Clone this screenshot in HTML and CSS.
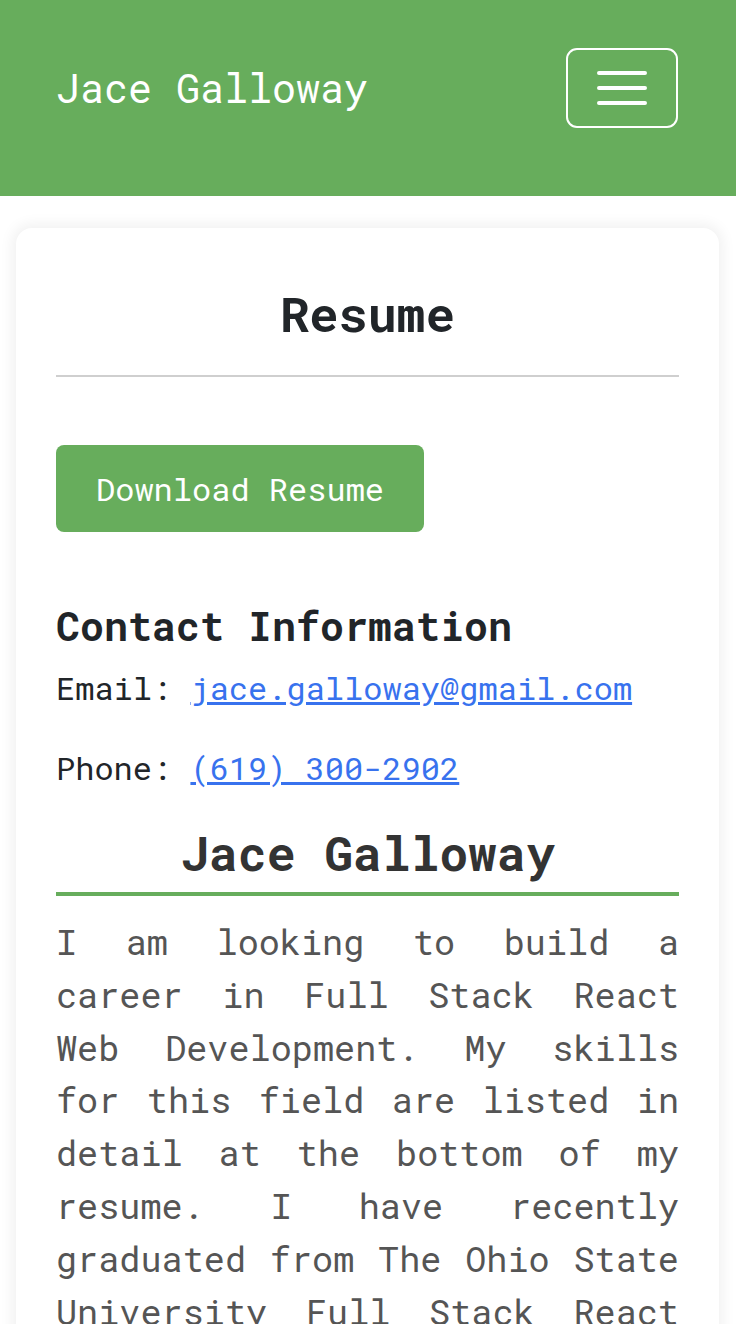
FILE: index.html
```html
<!DOCTYPE html>
<html lang="en">
<head>
<meta charset="utf-8">
<title>Jace Galloway - Resume</title>
<link rel="stylesheet" href="styles.css">
</head>
<body>
<nav class="navbar">
  <a class="brand" href="#">Jace Galloway</a>
  <button class="toggler" type="button" aria-label="Toggle navigation">
    <svg width="50" height="36" viewBox="0 0 50 36" aria-hidden="true">
      <path d="M2 3H48M2 18H48M2 33H48" stroke="#fff" stroke-width="4" stroke-linecap="round" fill="none"/>
    </svg>
  </button>
</nav>
<main class="page">
  <section class="card">
    <h2 class="title">Resume</h2>
    <hr class="rule">
    <a class="btn" href="#">Download Resume</a>
    <h5 class="section-head">Contact Information</h5>
    <p class="contact">Email: <a href="mailto:jace.galloway@gmail.com">jace.galloway@gmail.com</a></p>
    <p class="contact">Phone: <a href="tel:6193002902">(619) 300-2902</a></p>
    <h4 class="name">Jace Galloway</h4>
    <p class="summary">I am looking to build a career in Full Stack React Web Development. My skills for this field are listed in detail at the bottom of my resume. I have recently graduated from The Ohio State University Full Stack React Web Development bootcamp and am eager to put my skills to work.</p>
  </section>
</main>
</body>
</html>
```
FILE: styles.css
```css
* { box-sizing: border-box; }
html, body { margin: 0; padding: 0; }
body {
  background: #fff;
  font-family: "Roboto Mono", "DejaVu Sans Mono", monospace;
  color: #212529;
  font-size: 32px;
  line-height: 1.5;
}
.navbar {
  background: #67ad5c;
  display: flex;
  align-items: center;
  justify-content: space-between;
  padding: 48px 58px 68px 56px;
  height: 196px;
}
.brand {
  color: #fff;
  text-decoration: none;
  font-size: 40px;
  line-height: 60px;
}
.toggler {
  width: 112px;
  height: 80px;
  border: 2px solid #fff;
  border-radius: 11px;
  background: transparent;
  display: flex;
  align-items: center;
  justify-content: center;
  padding: 0;
}
.page {
  padding: 32px 17px 0 16px;
}
.card {
  background: #fff;
  border-radius: 16px;
  box-shadow: 0 0 14px 4px rgba(0, 0, 0, 0.06);
  padding: 56px 40px 40px;
  min-height: 1200px;
}
.title {
  margin: 0;
  font-size: 48.5px;
  line-height: 58px;
  font-weight: 700;
  text-align: center;
  color: #212529;
}
.rule {
  margin: 33px 0 0;
  border: 0;
  border-top: 2px solid #cfcfcf;
}
.btn {
  display: inline-block;
  margin-top: 68px;
  background: #67ad5c;
  color: #fff;
  text-decoration: none;
  border-radius: 8px;
  padding: 20px 40px;
  line-height: 47px;
  font-size: 32px;
}
.section-head {
  margin: 70px 0 14px;
  font-size: 40px;
  line-height: 48px;
  font-weight: 700;
  color: #212529;
}
.contact {
  margin: 0 0 32px;
  color: #212529;
}
.contact a { color: #3872ee; }
.name {
  margin: 5px 0 0;
  font-size: 48px;
  line-height: 58px;
  font-weight: 700;
  text-align: center;
  color: #333;
  padding-bottom: 10px;
  border-bottom: 4px solid #67ad5c;
}
.summary {
  margin: 20px 0 0;
  font-size: 35.2px;
  line-height: 52.8px;
  text-align: justify;
  color: #555;
}
```
